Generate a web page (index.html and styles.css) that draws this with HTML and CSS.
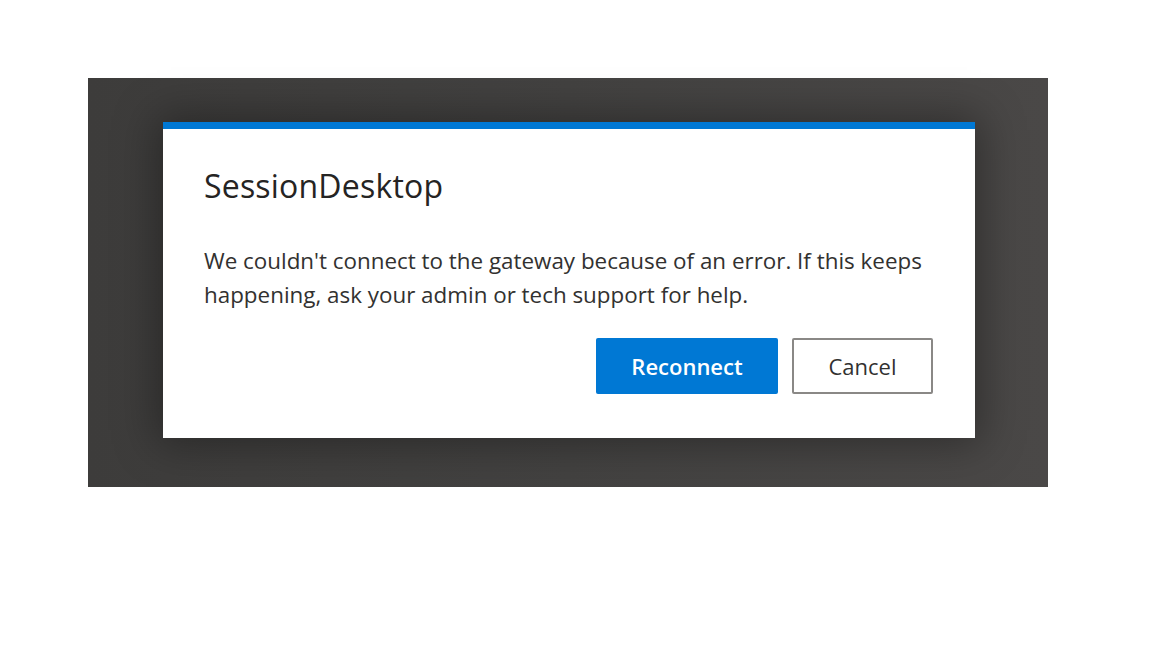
FILE: index.html
```html
<!DOCTYPE html>
<html>
<head>
<meta charset="utf-8">
<link rel="stylesheet" href="styles.css">
</head>
<body>
<div class="stage">
  <div class="dialog">
    <h1 class="title">SessionDesktop</h1>
    <p class="message">We couldn't connect to the gateway because of an error. If this keeps<br>happening, ask your admin or tech support for help.</p>
    <div class="actions">
      <button class="btn primary">Reconnect</button>
      <button class="btn secondary">Cancel</button>
    </div>
  </div>
</div>
</body>
</html>
```
FILE: styles.css
```css
html, body {
  margin: 0;
  background: #ffffff;
}
body {
  padding: 78px 0 0 88px;
  font-family: "Open Sans", "Noto Sans", sans-serif;
}
.stage {
  width: 960px;
  height: 409px;
  box-sizing: border-box;
  padding: 44px 0 0 75px;
  background: linear-gradient(90deg, #3d3c3b 0%, #434241 50%, #4a4847 100%);
}
.dialog {
  width: 812px;
  height: 316px;
  box-sizing: border-box;
  background: #ffffff;
  border-top: 7px solid #0078d4;
  padding: 36px 40px 0 41px;
  box-shadow: 0 0 40px 6px rgba(0, 0, 0, 0.35);
}
.title {
  margin: 0;
  font-size: 32px;
  font-weight: 400;
  line-height: 42px;
  color: #252423;
  letter-spacing: 0.2px;
}
.message {
  margin: 37px 0 0;
  font-size: 22.4px;
  line-height: 34px;
  color: #323130;
  white-space: nowrap;
}
.actions {
  display: flex;
  justify-content: flex-end;
  gap: 14px;
  margin-top: 26px;
  padding-right: 2px;
}
.btn {
  height: 56px;
  font-family: inherit;
  font-size: 22px;
  box-sizing: border-box;
  padding: 0;
  cursor: pointer;
}
.primary {
  width: 182px;
  background: #0078d4;
  color: #ffffff;
  border: none;
  border-radius: 2px;
  font-weight: 600;
}
.secondary {
  width: 141px;
  background: #ffffff;
  color: #323130;
  border: 2px solid #8a8886;
  border-radius: 2px;
}
```
